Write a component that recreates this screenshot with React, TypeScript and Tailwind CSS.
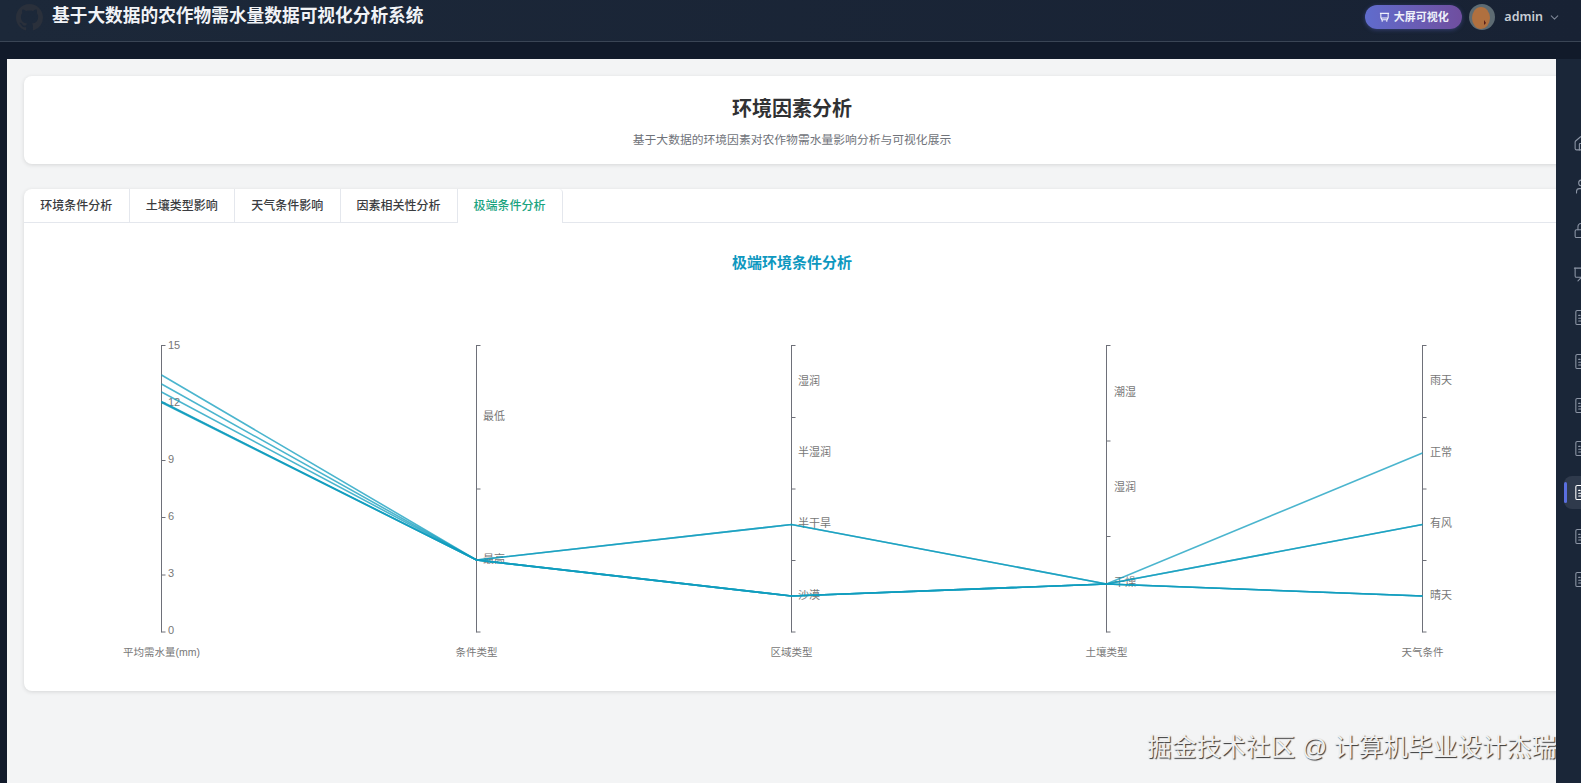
import { ChevronDown, FileText, Home, Lock, Presentation, User } from 'lucide-react';

const tabs = ['环境条件分析', '土壤类型影响', '天气条件影响'];

const axes = [
  { x: 161.5, name: '平均需水量(mm)', ticks: [345.5, 403, 460.5, 517.5, 575, 632] },
  { x: 476.5, name: '条件类型', ticks: [345.5, 489, 632] },
  { x: 791.5, name: '区域类型', ticks: [345.5, 417.5, 489, 560.5, 632] },
  { x: 1106.5, name: '土壤类型', ticks: [345.5, 441, 536.5, 632] },
  { x: 1422.5, name: '天气条件', ticks: [345.5, 417.5, 489, 560.5, 632] },
];

const axisLabels = [
  { x: 168, y: 345, t: '15' },
  { x: 168, y: 402, t: '12' },
  { x: 168, y: 459, t: '9' },
  { x: 168, y: 516, t: '6' },
  { x: 168, y: 573, t: '3' },
  { x: 168, y: 630, t: '0' },
  { x: 483, y: 416, t: '最低' },
  { x: 483, y: 559, t: '最高' },
  { x: 798, y: 381, t: '湿润' },
  { x: 798, y: 452, t: '半湿润' },
  { x: 798, y: 523, t: '半干旱' },
  { x: 798, y: 595, t: '沙漠' },
  { x: 1114, y: 392, t: '潮湿' },
  { x: 1114, y: 487, t: '湿润' },
  { x: 1114, y: 582, t: '干燥' },
  { x: 1430, y: 380, t: '雨天' },
  { x: 1430, y: 452, t: '正常' },
  { x: 1430, y: 523, t: '有风' },
  { x: 1430, y: 595, t: '晴天' },
];

const lines = [
  [375, 560, 596, 584, 453],
  [384, 560, 596, 584, 524.5],
  [392, 560, 524.5, 584, 596],
  [401.5, 560, 524.5, 584, 524.5],
  [402.5, 560, 596, 584, 596],
  [402, 560, 596, 584, 596],
];

const sideIcons = [Home, User, Lock, Presentation, FileText, FileText, FileText, FileText, FileText, FileText, FileText];

function GithubMark() {
  return (
    <svg viewBox="0 0 16 16" className="w-[27px] h-[27px] ml-4 shrink-0" fill="#2a303b">
      <path d="M8 0C3.58 0 0 3.58 0 8c0 3.54 2.29 6.53 5.47 7.59.4.07.55-.17.55-.38 0-.19-.01-.82-.01-1.49-2.01.37-2.53-.49-2.69-.94-.09-.23-.48-.94-.82-1.13-.28-.15-.68-.52-.01-.53.63-.01 1.08.58 1.23.82.72 1.21 1.87.87 2.33.66.07-.52.28-.87.51-1.07-1.78-.2-3.64-.89-3.64-3.95 0-.87.31-1.59.82-2.15-.08-.2-.36-1.02.08-2.12 0 0 .67-.21 2.2.82.64-.18 1.32-.27 2-.27s1.36.09 2 .27c1.53-1.04 2.2-.82 2.2-.82.44 1.1.16 1.92.08 2.12.51.56.82 1.27.82 2.15 0 3.07-1.87 3.75-3.65 3.95.29.25.54.73.54 1.48 0 1.07-.01 1.93-.01 2.2 0 .21.15.46.55.38A8.01 8.01 0 0 0 16 8c0-4.42-3.58-8-8-8z" />
    </svg>
  );
}

function CartIcon() {
  return (
    <svg viewBox="0 0 12 12" className="w-[11px] h-[11px] shrink-0" fill="none" stroke="currentColor" strokeWidth="1.2">
      <path d="M1 1.5h10M2 1.5v5h8v-5M2.5 6.5l.5 2h6l.5-2M3.5 8.5v2M8.5 8.5v2" />
    </svg>
  );
}

function Avatar() {
  return (
    <svg viewBox="0 0 26 26" className="w-[26px] h-[26px] ml-[7px] shrink-0">
      <circle cx="13" cy="13" r="13" fill="#5d6b73" />
      <ellipse cx="12" cy="14" rx="9" ry="11" fill="#b0703f" />
      <path d="M15 16l2 3-2 2z" fill="#5a1f1a" />
    </svg>
  );
}

function Chart() {
  return (
    <svg viewBox="24 330 1532 340" width="1532" height="340" className="block">
      {axes.map((a) => (
        <g key={a.name} stroke="#6e7079" strokeWidth="1" fill="none">
          <line x1={a.x} y1="345" x2={a.x} y2="632.5" />
          {a.ticks.map((t) => (
            <line key={t} x1={a.x} y1={t} x2={a.x + 4} y2={t} />
          ))}
        </g>
      ))}
      {axisLabels.map((l) => (
        <text key={l.x + l.t} x={l.x} y={l.y} fontSize="11" fill="#777" dominantBaseline="central">
          {l.t}
        </text>
      ))}
      {axes.map((a) => (
        <text key={a.name} x={a.x} y="652" fontSize="10.5" fill="#777" textAnchor="middle" dominantBaseline="central">
          {a.name}
        </text>
      ))}
      {lines.map((l, i) => (
        <polyline
          key={i}
          points={l.map((y, j) => `${axes[j].x},${y}`).join(' ')}
          fill="none"
          stroke="#0f9cbd"
          strokeOpacity="0.75"
          strokeWidth="1.6"
        />
      ))}
    </svg>
  );
}

export default function App() {
  return (
    <div className="relative w-full h-screen overflow-hidden flex flex-col bg-[#111a2a] font-['Liberation_Sans','Noto_Sans_CJK_SC',sans-serif]">
      <header className="h-[42px] shrink-0 flex items-center pb-[7px] border-b border-[#3a4555] bg-gradient-to-r from-[#1c2839] to-[#182234]">
        <GithubMark />
        <h1 className="ml-[9px] text-[17.7px] font-bold text-[#f1f3f6] leading-none">基于大数据的农作物需水量数据可视化分析系统</h1>
        <div className="ml-auto flex items-center mr-[20px]">
          <div className="w-[97px] h-[24px] rounded-full bg-gradient-to-r from-[#5f6ccd] to-[#6f4e9f] shadow-[0_1px_4px_rgba(95,108,205,0.4)] flex items-center justify-center gap-[4px] text-[#eef0fa] text-[11px] font-bold">
            <CartIcon />
            大屏可视化
          </div>
          <Avatar />
          <span className="ml-[9px] font-['Noto_Sans',sans-serif] text-[12.5px] font-semibold text-[#c9ced6]">admin</span>
          <ChevronDown size={13} className="ml-[5px] text-[#7b8494]" />
        </div>
      </header>
      <div className="flex-1 flex pt-[17px] min-h-0">
        <main className="ml-[7px] w-[1549px] shrink-0 overflow-hidden bg-[#f3f4f5] pl-[17px] pt-[17px]">
          <section className="w-[1560px] h-[88px] bg-white rounded-lg shadow-[0_1px_4px_rgba(0,0,0,0.12)] flex flex-col items-center pr-[24px] pt-[20px]">
            <h2 className="text-[20px] font-bold leading-[26px] text-[#303133]">环境因素分析</h2>
            <p className="mt-[10px] text-[11.8px] leading-[16px] text-[#70737a]">基于大数据的环境因素对农作物需水量影响分析与可视化展示</p>
          </section>
          <section className="mt-[25px] w-[1560px] h-[502px] bg-white rounded-lg shadow-[0_1px_4px_rgba(0,0,0,0.12)]">
            <div className="h-[34px] flex border-b border-[#e4e7ed]">
              {tabs.map((t) => (
                <div key={t} className="w-[105.5px] flex items-center justify-center border-r border-[#e4e7ed] text-[12px] font-medium text-[#3a3c40]">
                  {t}
                </div>
              ))}
              <div className="w-[117px] flex items-center justify-center border-r border-[#e4e7ed] text-[12px] font-medium text-[#3a3c40]">
                因素相关性分析
              </div>
              <div className="w-[105px] h-[34px] flex items-center justify-center bg-white border-r border-[#e4e7ed] rounded-t-sm text-[12px] font-medium text-[#1aa37f]">
                极端条件分析
              </div>
            </div>
            <h3 className="pt-[30px] pr-[24px] text-center text-[15px] leading-[20px] font-bold text-[#0e98bf]">极端环境条件分析</h3>
            <div className="mt-[57px]">
              <Chart />
            </div>
          </section>
        </main>
        <aside className="flex-1 bg-[#1a2638] pl-[8px] pt-[67.5px] flex flex-col gap-[10.7px] overflow-hidden">
          {sideIcons.map((Icon, i) => (
            <div
              key={i}
              className={
                i === 8
                  ? 'relative w-[40px] h-[33px] shrink-0 flex items-center pl-[9px] rounded-lg bg-[#2f3a4c] text-white'
                  : 'w-[40px] h-[33px] shrink-0 flex items-center pl-[9px] text-[#8d96a6]'
              }
            >
              {i === 8 && <span className="absolute left-0 top-[6px] w-[3px] h-[21px] rounded-sm bg-[#5a6fe0]" />}
              <Icon size={17} strokeWidth={1.5} className="shrink-0" />
            </div>
          ))}
        </aside>
      </div>
      <div className="absolute left-[1147px] top-[733px] w-[420px] whitespace-nowrap text-[24.7px] leading-[30px] text-[#f0f0f0] [text-shadow:1px_1px_1px_#333]">
        掘金技术社区 @ 计算机毕业设计杰瑞
      </div>
    </div>
  );
}
